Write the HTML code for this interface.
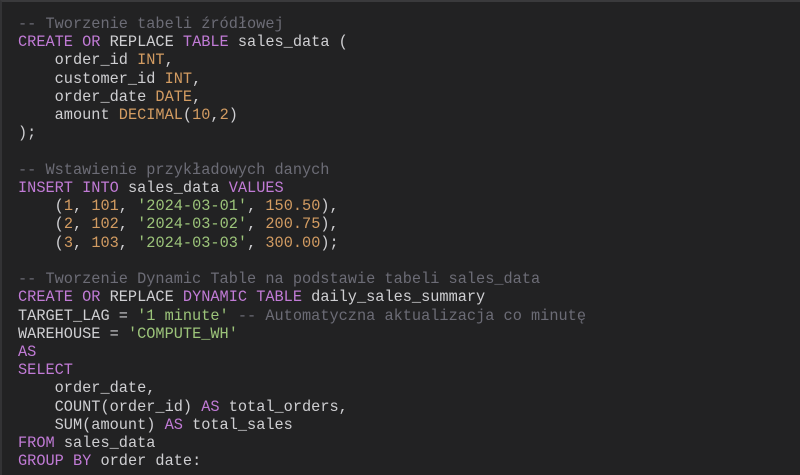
<!DOCTYPE html>
<html><head><meta charset="utf-8"><style>
html,body{margin:0;padding:0;width:800px;height:475px;overflow:hidden;background:#222223}
.f{position:absolute;left:0;top:0;width:798px;height:473px;border-top:2px solid #3a3a3c;border-left:2px solid #333335;background:#222223}
pre{position:absolute;left:18px;top:15px;margin:0;font-family:"Liberation Mono",monospace;font-size:15.27px;line-height:18.22px;color:#cfcfd2}
.c{color:#6c6c76}.k{color:#c17bd6}.t{color:#d39c62}.s{color:#9cc47a}
</style></head><body><div class="f"></div>
<pre><span class="c">-- Tworzenie tabeli źródłowej</span>
<span class="k">CREATE OR</span> REPLACE <span class="k">TABLE</span> sales_data (
    order_id <span class="t">INT</span>,
    customer_id <span class="t">INT</span>,
    order_date <span class="t">DATE</span>,
    amount <span class="t">DECIMAL</span>(<span class="t">10</span>,<span class="t">2</span>)
);

<span class="c">-- Wstawienie przykładowych danych</span>
<span class="k">INSERT INTO</span> sales_data <span class="k">VALUES</span>
    (<span class="t">1</span>, <span class="t">101</span>, <span class="s">'2024-03-01'</span>, <span class="t">150.50</span>),
    (<span class="t">2</span>, <span class="t">102</span>, <span class="s">'2024-03-02'</span>, <span class="t">200.75</span>),
    (<span class="t">3</span>, <span class="t">103</span>, <span class="s">'2024-03-03'</span>, <span class="t">300.00</span>);

<span class="c">-- Tworzenie Dynamic Table na podstawie tabeli sales_data</span>
<span class="k">CREATE OR</span> REPLACE <span class="k">DYNAMIC TABLE</span> daily_sales_summary
TARGET_LAG = <span class="s">'1 minute'</span> <span class="c">-- Automatyczna aktualizacja co minutę</span>
WAREHOUSE = <span class="s">'COMPUTE_WH'</span>
<span class="k">AS</span>
<span class="k">SELECT</span>
    order_date,
    COUNT(order_id) <span class="k">AS</span> total_orders,
    SUM(amount) <span class="k">AS</span> total_sales
<span class="k">FROM</span> sales_data
<span class="k">GROUP BY</span> order date:
</pre></body></html>
